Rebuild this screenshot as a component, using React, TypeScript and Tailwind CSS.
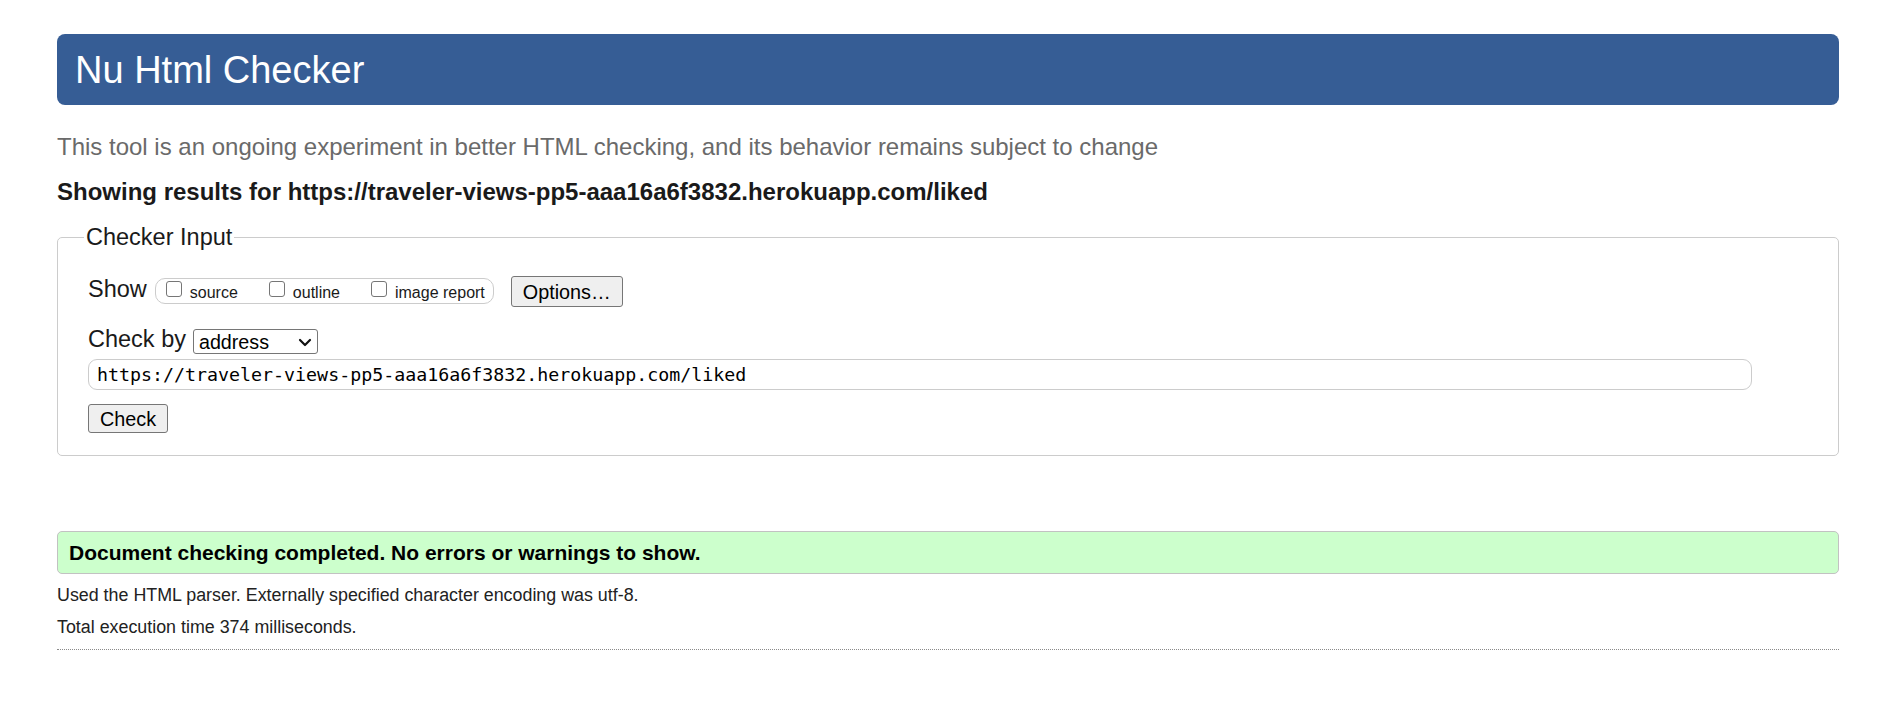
import { useState } from 'react';

const URL = 'https://traveler-views-pp5-aaa16a6f3832.herokuapp.com/liked';

function ShowOption({ label, first }: { label: string; first?: boolean }) {
  const [checked, setChecked] = useState(false);
  return (
    <label className={`flex items-start ${first ? 'ml-[10px]' : 'ml-[31px]'}`}>
      <input
        type="checkbox"
        checked={checked}
        onChange={() => setChecked(!checked)}
        className="mt-px h-4 w-4 appearance-none rounded-[3px] border border-[#767676] bg-white checked:bg-[#0075ff]"
      />
      <span className="ml-2 mt-[4px] text-[16px] leading-[18px]">{label}</span>
    </label>
  );
}

export default function App() {
  const [url, setUrl] = useState(URL);

  return (
    <div
      className="min-h-[702px] bg-white px-[57px] pt-[34px] text-[#1a1a1a]"
      style={{ fontFamily: '"Liberation Sans", Arial, sans-serif' }}
    >
      {/* Header */}
      <header className="flex h-[71px] items-center rounded-lg bg-[#365d95] pl-[18px]">
        <h1 className="text-[38px] leading-[44px] text-white">Nu Html Checker</h1>
      </header>

      <p className="mt-[28px] text-[24px] leading-[28px] text-[#6a6a6a]">
        This tool is an ongoing experiment in better HTML checking, and its behavior remains subject to change
      </p>

      <p className="mt-[17px] text-[24px] font-bold leading-[27px]">Showing results for {URL}</p>

      {/* Checker input */}
      <fieldset className="mt-[19px] rounded-[5px] border border-[#cccccc] px-0 pb-[22px] pt-[25px]">
        <legend className="ml-[26px] px-[2px] text-[23.5px] leading-[27px]">Checker Input</legend>

        <div className="pl-[30px]">
          <div className="flex h-[31px] items-start">
            <span className="text-[23.5px] leading-[27px]">Show</span>
            <div className="ml-[8px] mt-[2px] flex h-[26px] items-start rounded-[10px] border border-[#cccccc] pr-[8px] pt-px">
              <ShowOption label="source" first />
              <ShowOption label="outline" />
              <ShowOption label="image report" />
            </div>
            <button className="ml-[17px] h-[31px] rounded-[3px] border border-[#767676] bg-[#efefef] px-[11px] text-[19.8px] leading-[22px] text-black">
              Options…
            </button>
          </div>

          <div className="mt-[19px] flex items-start">
            <span className="text-[23.5px] leading-[27px]">Check by</span>
            <div className="relative ml-[7px] mt-[3px] h-[25px] w-[125px]">
              <select className="h-[25px] w-full appearance-none rounded-[3px] border border-[#767676] bg-white pl-[5px] text-[19.7px] leading-[22px] text-black outline-none">
                <option>address</option>
                <option>file upload</option>
                <option>text input</option>
              </select>
              <svg
                className="pointer-events-none absolute right-[6px] top-[9px]"
                width="14"
                height="9"
                viewBox="0 0 14 9"
                fill="none"
                stroke="#111"
                strokeWidth="2.2"
                strokeLinecap="round"
                strokeLinejoin="round"
              >
                <path d="M2 2l5 5 5-5" />
              </svg>
            </div>
          </div>

          <input
            value={url}
            onChange={(e) => setUrl(e.target.value)}
            className="mt-[5px] block h-[31px] w-[1664px] rounded-[9px] border border-[#cccccc] bg-white pl-[8px] text-[18.3px] text-black outline-none"
            style={{ fontFamily: '"DejaVu Sans Mono", Consolas, monospace' }}
          />

          <button className="mt-[14px] block h-[29px] rounded-[3px] border border-[#767676] bg-[#efefef] px-[11px] text-[19.8px] leading-[22px] text-black">
            Check
          </button>
        </div>
      </fieldset>

      {/* Result */}
      <div className="mt-[75px] flex h-[43px] items-center rounded-[5px] border border-[#c2c2c2] bg-[#ccffcc] pl-[11px]">
        <p className="text-[21px] font-bold leading-[24px] text-black">
          Document checking completed. No errors or warnings to show.
        </p>
      </div>

      <p className="mt-[10.6px] text-[17.85px] leading-[20.4px] text-[#222]">
        Used the HTML parser. Externally specified character encoding was utf-8.
      </p>
      <p className="mt-[11.6px] text-[17.85px] leading-[20.4px] text-[#222]">Total execution time 374 milliseconds.</p>

      <hr className="mt-[12px] border-0 border-t border-dotted border-[#8a8a8a]" />
    </div>
  );
}
